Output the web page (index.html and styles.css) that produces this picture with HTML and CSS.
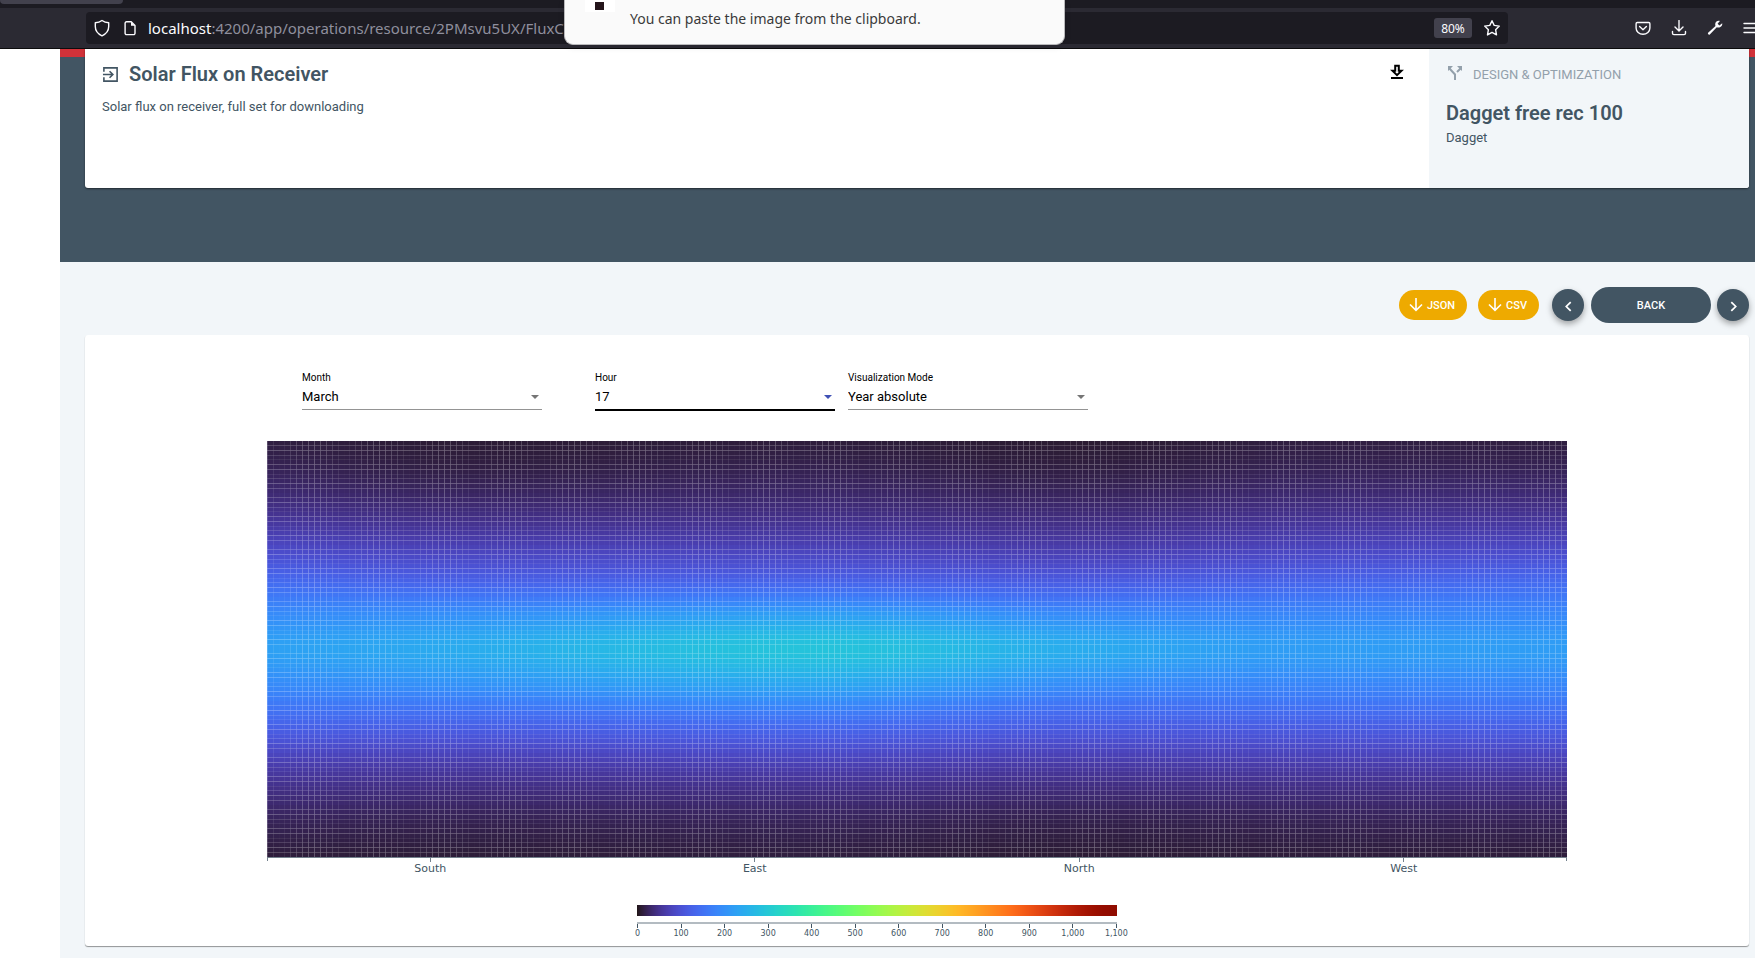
FILE: index.html
```html
<!DOCTYPE html>
<html lang="en">
<head>
<meta charset="utf-8">
<title>Solar Flux on Receiver</title>
<link rel="stylesheet" href="styles.css">
</head>
<body>
<div class="tabstrip"><div class="tab"></div></div>
<div class="toolbar">
  <div class="urlbar">
    <svg class="ic shield" viewBox="0 0 16 18"><path d="M8 1.500c2 1.400 4.300 2.100 6.700 2.300v3.700c0 4-2.400 7.300-6.700 9.300-4.300-2-6.700-5.300-6.700-9.300V3.800C3.700 3.600 6 2.900 8 1.500z"/></svg>
    <svg class="ic doc" viewBox="0 0 12 16"><path d="M2.500 1.800h4.700l3.800 3.800v7.600a1.400 1.400 0 0 1-1.400 1.400H2.500a1.400 1.400 0 0 1-1.400-1.400V3.200a1.400 1.400 0 0 1 1.400-1.400z"/><path class="fill" d="M7 1.800v3.900h4z"/></svg>
    <span class="url"><b>localhost</b>:4200/app/operations/resource/2PMsvu5UX/FluxC</span>
    <button class="zoomlevel" type="button">80%</button>
    <svg class="ic star" viewBox="0 0 18 18"><path d="M9 1.700l2.200 4.700 5.100.7-3.700 3.600.9 5.200L9 13.400l-4.500 2.500.9-5.200L1.700 7.100l5.100-.7z"/></svg>
  </div>
  <div class="tools">
    <svg class="ic" viewBox="0 0 16 16"><path d="M2.300 2.500h11.400c.7 0 1.200.5 1.200 1.200v4.200a6.900 6.400 0 0 1-13.800 0V3.700c0-.7.5-1.200 1.200-1.200z"/><path d="M4.600 6.500L8 9.700l3.400-3.200"/></svg>
    <svg class="ic" viewBox="0 0 16 16"><path d="M8 .5v10.300M4 7.100l4 3.900 4-3.900M1.500 11.500v1.700c0 .9.600 1.400 1.400 1.400h10.200c.8 0 1.400-.5 1.400-1.400v-1.700"/></svg>
    <svg class="ic" viewBox="0 0 16 16"><path class="fill" d="M15.200 3.300l-2.800 2.200-1.800-1.700 2.300-2.800C10.500.2 8 2.100 8.200 4.600c0 .5.100.9.300 1.300L1.100 12.800c-.8.8.7 2.600 1.700 1.800l7-7.300c2.900 1 5.900-.8 5.400-4z"/></svg>
    <svg class="ic" viewBox="0 0 16 16"><path d="M1 3.500h14M1 8h14M1 12.500h14"/></svg>
  </div>
</div>
<div class="toast">
  <div class="thumb"></div>
  <p>You can paste the image from the clipboard.</p>
</div>

<div class="app">
  <aside class="side"></aside>
  <main class="main">
    <header class="hero">
      <section class="summary">
        <div class="resource">
          <div class="resource-head">
            <svg class="enter" viewBox="0 0 18 18"><path d="M2 6V2h14v14H2v-4M1 9h10M8 5.500L11.500 9 8 12.500"/></svg>
            <h1>Solar Flux on Receiver</h1>
            <button class="dl" type="button" aria-label="Download"><svg viewBox="0 0 14 16"><path d="M5.200 1.800h3.600v5h2.700L7 11.200 2.500 6.800h2.700z" fill="none" stroke="#000" stroke-width="2"/><path d="M1 13h12v2H1z"/></svg></button>
          </div>
          <p>Solar flux on receiver, full set for downloading</p>
        </div>
        <div class="design">
          <div class="design-head">
            <svg viewBox="0 0 16 16"><path d="M8 15V9.500L2.500 3.500M10 7L13.500 3.500" fill="none" stroke="#93a0ab" stroke-width="2"/><path d="M1 1h5L1 6zM15 1h-5l5 5z"/></svg>
            <span>DESIGN &amp; OPTIMIZATION</span>
          </div>
          <h2>Dagget free rec 100</h2>
          <p>Dagget</p>
        </div>
      </section>
    </header>

    <nav class="actions">
      <button class="pill" type="button"><svg viewBox="0 0 14 14"><path d="M7 0v12M1 6.500L7 12.300l6-5.800"/></svg>JSON</button>
      <button class="pill csv" type="button"><svg viewBox="0 0 14 14"><path d="M7 0v12M1 6.500L7 12.300l6-5.800"/></svg>CSV</button>
      <button class="round prev" type="button" aria-label="Previous"><svg viewBox="0 0 10 10"><path d="M7 1L3 5l4 4"/></svg></button>
      <button class="back" type="button">BACK</button>
      <button class="round" type="button" aria-label="Next"><svg viewBox="0 0 10 10"><path d="M3 1l4 4-4 4"/></svg></button>
    </nav>

    <section class="card">
      <form class="filters">
        <div class="field month"><label for="month">Month</label><select id="month"><option>March</option></select></div>
        <div class="field active"><label for="hour">Hour</label><select id="hour"><option>17</option></select></div>
        <div class="field"><label for="mode">Visualization Mode</label><select id="mode"><option>Year absolute</option></select></div>
      </form>
      <div class="plot"><canvas id="heat"></canvas></div>
      <div class="axis"><span>South</span><span>East</span><span>North</span><span>West</span></div>
      <div class="legend">
        <canvas id="scale"></canvas>
        <div class="ticks" id="ticks"></div>
      </div>
    </section>
  </main>
</div>
<script src="chart.js"></script>
</body>
</html>
```
FILE: styles.css
```css
* { box-sizing: border-box; }
body {
  margin: 0;
  height: 100vh;
  overflow: hidden;
  display: flex;
  flex-direction: column;
  background: #fff;
  color: #425563;
  font-family: Roboto, sans-serif;
  font-size: 13px;
}
h1, h2, p { margin: 0; }
button { border: 0; padding: 0; font-family: inherit; }
svg { display: block; flex: none; }

/* browser chrome */
.tabstrip { height: 8px; background: #1c1b22; flex: none; }
.tab { width: 123px; height: 4px; background: #42414d; border-radius: 0 0 4px 4px; }
.toolbar {
  flex: none;
  height: 41px;
  padding: 4px 0 4px 86px;
  display: flex;
  justify-content: space-between;
  background: #2b2a33;
  border-bottom: 1px solid #0c0c0d;
}
.urlbar {
  flex: 0 0 1422px;
  height: 32px;
  padding: 0 7px 0 8px;
  display: flex;
  align-items: center;
  background: #1c1b22;
  border-radius: 4px;
}
.ic { width: 16px; height: 16px; fill: none; stroke: #fbfbfe; stroke-width: 1.4; stroke-linecap: round; stroke-linejoin: round; }
.ic .fill { fill: #fbfbfe; stroke: none; }
.shield { width: 16px; height: 18px; }
.doc { width: 12px; margin-left: 14px; }
.star { width: 18px; height: 18px; margin-left: 11px; }
.url {
  flex: 1;
  margin-left: 12px;
  color: #8f8f9d;
  font: 15px "Noto Sans", sans-serif;
  white-space: nowrap;
}
.url b { color: #fbfbfe; font-weight: 400; }
.zoomlevel {
  width: 38px;
  height: 20px;
  border-radius: 3px;
  background: #42414d;
  color: #fbfbfe;
  font: 12px "Noto Sans", sans-serif;
}
.tools { display: flex; align-items: center; gap: 20px; margin-right: -4px; }
.toast {
  position: absolute;
  z-index: 2;
  left: 564px;
  top: 0;
  width: 501px;
  height: 45px;
  padding: 0 20px;
  display: flex;
  gap: 15px;
  background: #fafafa;
  border: 1px solid #b9b9bb;
  border-top: 0;
  border-radius: 0 0 9px 9px;
  box-shadow: 0 2px 6px rgba(0, 0, 0, .12);
}
.thumb { width: 30px; height: 12px; padding: 2px 10px; background: #fff; }
.thumb::before { content: ""; display: block; width: 9px; height: 8px; background: #24151a; }
.toast p { padding-top: 9px; color: #3a3a3a; font: 14px/20px "Noto Sans", sans-serif; white-space: nowrap; }

/* page */
.app { flex: 1; display: flex; min-height: 0; }
.side { flex: 0 0 60px; background: #fff; }
.main { flex: 1; min-width: 0; background: #f2f6f9; }
.hero {
  padding: 0 6px 74px 25px;
  background: linear-gradient(#d13239 8px, #425563 8px);
}
.summary {
  display: flex;
  min-height: 139px;
  background: #fff;
  border-radius: 0 0 3px 3px;
  box-shadow: 0 1px 2px rgba(0, 0, 0, .5);
}
.resource { flex: 1; padding: 13px 25px 0 17px; }
.resource-head { display: flex; align-items: center; height: 24px; }
.enter { width: 17px; height: 17px; fill: none; stroke: #425563; stroke-width: 1.700; margin-right: 10px; }
h1, h2 { font-size: 20px; line-height: 24px; font-weight: 600; }
.resource p { margin-top: 13px; line-height: 16px; }
.dl { margin: -4px 0 0 auto; background: none; }
.dl svg { width: 14px; height: 16px; }
.design {
  flex: 0 0 320px;
  padding: 16px 17px 0;
  background: #f2f6f9;
  border-radius: 0 0 3px 0;
}
.design-head { display: flex; gap: 10px; color: #93a0ab; line-height: 20px; }
.design-head svg { width: 16px; height: 16px; margin-left: 1px; fill: #93a0ab; }
.design h2 { margin-top: 16px; }
.design p { margin-top: 5px; line-height: 16px; }

.actions { display: flex; justify-content: flex-end; align-items: center; padding: 25px 6px 12px; }
.actions button { color: #fff; font-size: 11px; font-weight: 500; }
.pill {
  height: 30px;
  padding: 0 12px 0 10px;
  margin-right: 11px;
  border-radius: 15px;
  background: #eeaa00;
  display: flex;
  align-items: center;
  gap: 4px;
}
.pill svg { width: 14px; height: 14px; }
.csv { margin-right: 13px; }
.actions svg { fill: none; stroke: #fff; stroke-width: 1.600; }
.round {
  width: 32px;
  height: 32px;
  border-radius: 50%;
  background: #425563;
  box-shadow: 0 3px 6px rgba(0, 0, 0, .35);
  display: flex;
  align-items: center;
  justify-content: center;
  padding-top: 3px;
}
.round svg { width: 11px; height: 11px; stroke-width: 1.600; }
.back { width: 120px; height: 36px; margin: 0 6px 0 7px; border-radius: 18px; background: #425563; }

.card {
  margin: 0 6px 0 25px;
  padding: 36px 182px 5px;
  background: #fff;
  border-radius: 3px;
  box-shadow: 0 1px 1px rgba(0, 0, 0, .4);
}
.filters { display: flex; gap: 13px; padding-left: 35px; margin-bottom: 30px; }
.field { position: relative; flex: 0 0 240px; height: 39px; border-bottom: 1px solid #949494; }
.field.month { margin-right: 40px; }
.field.active { height: 40px; border-bottom: 2px solid #000; }
.field label { display: block; color: #000; font-size: 10px; line-height: 14px; }
.field select {
  display: block;
  appearance: none;
  width: 100%;
  height: 24px;
  padding: 0;
  border: 0;
  background: none;
  color: #000;
  font: 13px/24px Roboto, sans-serif;
}
.field::after {
  content: "";
  position: absolute;
  right: 3px;
  top: 24px;
  border: 4px solid transparent;
  border-top-color: #757575;
  border-bottom: 0;
}
.field.active::after { border-top-color: #3f51b5; }

.plot { border-bottom: 1px solid #74828d; }
.plot canvas { display: block; width: 100%; height: 416px; }
.axis {
  display: flex;
  height: 22px;
  border: solid #74828d;
  border-width: 0 1px;
  border-image: linear-gradient(#74828d 4px, transparent 4px) 1;
  font: 11px/22px "DejaVu Sans", sans-serif;
  text-align: center;
}
.axis span { flex: 1; background: linear-gradient(#74828d, #74828d) center top / 1px 4px no-repeat; }
.legend { width: 480px; margin: 25px 0 0 calc(50% - 280px); }
.legend canvas { display: block; width: 100%; height: 11px; }
.ticks {
  display: flex;
  justify-content: space-between;
  margin-top: 6px;
  border-top: 2px solid #b3bbc1;
  font: 8px/12px "DejaVu Sans", sans-serif;
}
.ticks span { width: 1px; height: 17px; display: flex; flex-direction: column; align-items: center; }
.ticks span::before { content: ""; flex: none; width: 1px; height: 4px; background: #425563; }
```
FILE: chart.js
```js
const COLS = 220, ROWS = 88;

function turbo(t) {
  const r = 34.61 + t * (1172.33 - t * (10793.56 - t * (33300.12 - t * (38394.49 - t * 14825.05))));
  const g = 23.31 + t * (557.33 + t * (1225.33 - t * (3574.96 - t * (1073.77 + t * 707.56))));
  const b = 27.2 + t * (3211.1 - t * (15327.97 - t * (27814 - t * (22569.18 - t * 6838.66))));
  return `rgb(${[r, g, b].map(c => Math.max(0, Math.min(255, Math.round(c)))).join(",")})`;
}

// Relative flux: one vertical profile for each angular knot.
const V = [0, .08, .17, .27, .33, .38, .42, .5, .58, .63, .69, .76, .83, .9, 1];
const U = [0, .15, .42, .62, .8, 1];
const FLUX = [
  [.012, .023, .044, .085, .122, .152, .175, .205, .175, .148, .112, .070, .043, .024, .010],
  [.008, .016, .036, .074, .108, .148, .182, .222, .187, .150, .109, .067, .040, .021, .009],
  [.010, .020, .038, .074, .110, .158, .205, .262, .218, .172, .122, .075, .044, .024, .011],
  [.007, .015, .033, .066, .100, .138, .175, .224, .180, .143, .105, .065, .038, .019, .008],
  [.012, .022, .042, .078, .112, .145, .168, .200, .168, .142, .105, .068, .041, .022, .010],
  [.012, .023, .045, .085, .122, .150, .170, .200, .170, .146, .111, .071, .043, .024, .010]
];

function spline(xs, ys, x) {
  let i = 0;
  while (i < xs.length - 2 && x > xs[i + 1]) i++;
  const slope = k => {
    const a = Math.max(0, k - 1), b = Math.min(xs.length - 1, k + 1);
    return (ys[b] - ys[a]) / (xs[b] - xs[a]);
  };
  const tangent = k => (k > 0 && k < xs.length - 1 && (ys[k] - ys[k - 1]) * (ys[k + 1] - ys[k]) < 0) ? 0 : slope(k);
  const h = xs[i + 1] - xs[i], s = (x - xs[i]) / h, s2 = s * s, s3 = s2 * s;
  return (2 * s3 - 3 * s2 + 1) * ys[i] + (s3 - 2 * s2 + s) * h * tangent(i)
    + (3 * s2 - 2 * s3) * ys[i + 1] + (s3 - s2) * h * tangent(i + 1);
}

function drawHeat() {
  const c = document.getElementById("heat");
  const w = c.width = c.clientWidth, h = c.height = c.clientHeight;
  const g = c.getContext("2d");
  const cw = w / COLS, ch = h / ROWS;
  for (let j = 0; j < ROWS; j++) {
    const v = (j + .5) / ROWS;
    const row = FLUX.map(p => spline(V, p, v));
    for (let i = 0; i < COLS; i++) {
      g.fillStyle = turbo(spline(U, row, (i + .5) / COLS));
      g.fillRect(.2 + i * cw, j * ch, cw, ch);
    }
  }
}

function drawScale() {
  const c = document.getElementById("scale");
  const w = c.width = c.clientWidth, h = c.height = c.clientHeight;
  const g = c.getContext("2d");
  for (let x = 0; x < w; x++) {
    g.fillStyle = turbo(x / w);
    g.fillRect(x, 0, 1, h);
  }
}

const ticks = document.getElementById("ticks");
for (let v = 0; v <= 1100; v += 100) {
  const s = document.createElement("span");
  s.textContent = v.toLocaleString("en-US");
  ticks.append(s);
}
drawHeat();
drawScale();
addEventListener("resize", () => { drawHeat(); drawScale(); });
```
